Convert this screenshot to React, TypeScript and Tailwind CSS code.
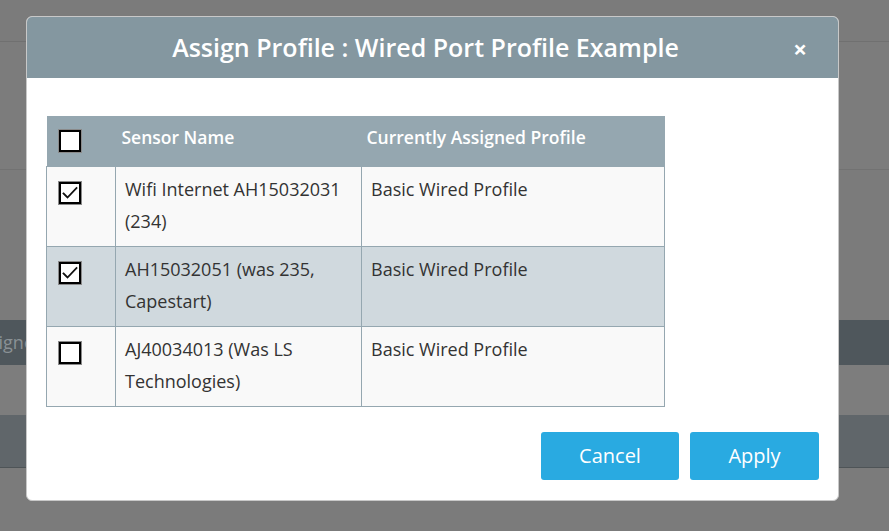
import React, { useState } from 'react'

type Sensor = {
  id: number
  name: string
  profile: string
  checked: boolean
}

const initialSensors: Sensor[] = [
  { id: 1, name: 'Wifi Internet AH15032031 (234)', profile: 'Basic Wired Profile', checked: true },
  { id: 2, name: 'AH15032051 (was 235, Capestart)', profile: 'Basic Wired Profile', checked: true },
  { id: 3, name: 'AJ40034013 (Was LS Technologies)', profile: 'Basic Wired Profile', checked: false },
]

const Checkbox: React.FC<{ checked: boolean; onChange: () => void }> = ({ checked, onChange }) => (
  <button
    type="button"
    onClick={onChange}
    className="flex h-[24px] w-[24px] items-center justify-center border border-[#8a8a8a] bg-white p-0"
  >
    <span className="flex h-[22px] w-[22px] items-center justify-center border-2 border-black bg-white">
      {checked && (
        <svg width="16" height="14" viewBox="0 0 16 14" fill="none">
          <path d="M1.5 7.5 L5.5 11.5 L14.5 2" stroke="#111" strokeWidth="1.8" strokeLinecap="square" />
        </svg>
      )}
    </span>
  </button>
)

export default function App() {
  const [sensors, setSensors] = useState(initialSensors)
  const allChecked = sensors.every((s) => s.checked)

  const toggle = (id: number) => {
    setSensors((prev) => prev.map((s) => (s.id === id ? { ...s, checked: !s.checked } : s)))
  }

  const toggleAll = () => {
    setSensors((prev) => prev.map((s) => ({ ...s, checked: !allChecked })))
  }

  return (
    <div
      className="relative h-[531px] w-[889px] overflow-hidden bg-[#7b7b7b]"
      style={{ fontFamily: '"Open Sans", "Noto Sans", sans-serif' }}
    >
      {/* dimmed page behind the modal */}
      <div className="flex flex-col">
        <div className="h-[42px] border-b border-[#707070] bg-[#7b7b7b]" />
        <div className="h-[128px] border-b border-[#727272] bg-[#7c7c7c]" />
        <div className="h-[150px]" />
        <div className="flex h-[45px] items-center overflow-hidden bg-[#4f575c] text-[18px] text-[#8a9195]">
          <span className="-ml-[30px] whitespace-nowrap">Assigned</span>
        </div>
        <div className="h-[50px] bg-[#7d7d7d]" />
        <div className="h-[53px] border-b border-[#4e5457] bg-[#60666a]" />
      </div>

      {/* modal */}
      <div className="absolute left-[26px] top-[16px] flex h-[485px] w-[813px] flex-col overflow-hidden rounded-[6px] border border-[#c8c8c8] bg-white">
        <div className="relative flex h-[61px] shrink-0 items-center justify-center bg-[#8497a0] pr-[14px]">
          <h2 className="text-[25px] font-semibold text-white">Assign Profile : Wired Port Profile Example</h2>
          <button
            type="button"
            className="absolute right-[31px] top-[20px] text-[24px] font-bold leading-none text-white"
          >
            ×
          </button>
        </div>

        <div className="flex-1 px-[19px] pt-[38px]">
          <table className="w-[619px] border-collapse">
            <thead>
              <tr className="h-[50px] bg-[#95a7b0] text-left text-[17.5px] text-white">
                <th className="w-[69px] pl-[11px] align-middle">
                  <Checkbox checked={allChecked} onChange={toggleAll} />
                </th>
                <th className="w-[246px] pb-[8px] pl-[6px] font-semibold">Sensor Name</th>
                <th className="pb-[8px] pl-[5px] font-semibold">Currently Assigned Profile</th>
              </tr>
            </thead>
            <tbody className="text-[18px]">
              {sensors.map((s, i) => (
                <tr key={s.id} className={i === 1 ? 'h-[80px] bg-[#d0d9de]' : 'h-[80px] bg-[#f9f9f9]'}>
                  <td className="border border-[#95a7b0] pl-[11px] pt-[14px] align-top">
                    <Checkbox checked={s.checked} onChange={() => toggle(s.id)} />
                  </td>
                  <td className="border border-[#95a7b0] px-[9px] pt-[6px] align-top leading-[32px] text-[#333]">
                    {s.name}
                  </td>
                  <td className="border border-[#95a7b0] px-[9px] pt-[6px] align-top leading-[32px] text-[#333]">
                    {s.profile}
                  </td>
                </tr>
              ))}
            </tbody>
          </table>
        </div>

        <div className="flex shrink-0 justify-end gap-[11px] pb-[20px] pr-[19px]">
          <button type="button" className="h-[48px] w-[138px] rounded-[3px] bg-[#29aae1] text-[20px] text-white">
            Cancel
          </button>
          <button type="button" className="h-[48px] w-[129px] rounded-[3px] bg-[#29aae1] text-[20px] text-white">
            Apply
          </button>
        </div>
      </div>
    </div>
  )
}
